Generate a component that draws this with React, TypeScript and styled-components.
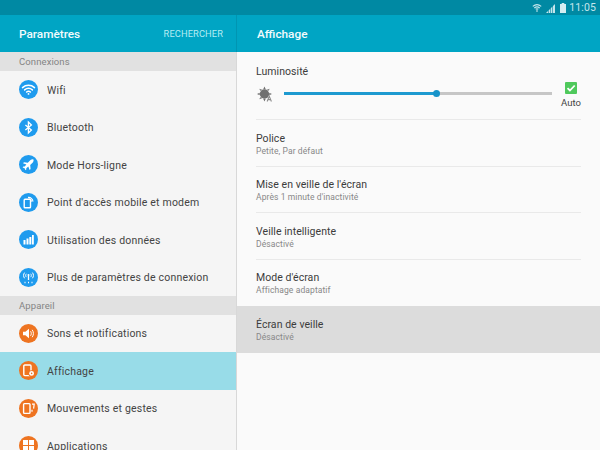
import React from 'react';
import styled, { createGlobalStyle } from 'styled-components';

const Global = createGlobalStyle`
  html, body { margin: 0; padding: 0; background: #fafafa; }
  body { font-family: Roboto, "Liberation Sans", sans-serif; }
`;

const Screen = styled.div`
  width: 600px; height: 450px; overflow: hidden; display: flex; flex-direction: column; background: #fafafa;
`;
const StatusBar = styled.div`
  height: 15px; flex: none; background: #0089a3; display: flex; align-items: center; justify-content: flex-end;
  padding-right: 4px; color: #c4e6ec; font-size: 10.5px; line-height: 15px;
`;
const Clock = styled.span`margin-left: 3px; letter-spacing: 0.1px;`;
const StatusIcon = styled.svg<{ $gap?: number }>`display: block; flex: none; margin-left: ${p => p.$gap ?? 0}px;`;
const Panes = styled.div`flex: 1; display: flex; min-height: 0;`;
const Left = styled.div`
  width: 237px; flex: none; display: flex; flex-direction: column; overflow: hidden;
`;
const LeftBody = styled.div`
  flex: 1; min-height: 0; background: #f5f5f5; border-right: 1px solid #d8d8d8; display: flex; flex-direction: column;
`;
const Right = styled.div`flex: 1; display: flex; flex-direction: column; min-width: 0;`;
const Header = styled.div`
  height: 37px; flex: none; box-sizing: border-box; background: #00a5c4; display: flex; align-items: center;
  justify-content: space-between; padding: 0 13px 0 19px; color: #fff; border-right: 1px solid #0095b2;
`;
const RightHeader = styled(Header)`padding-left: 20px; border-right: 0;`;
const Title = styled.div`font-size: 11.8px; font-weight: 500; color: #f2fbfd; padding-top: 1px;`;
const Search = styled.div`font-size: 9.3px; font-weight: 400; color: #b5ecf3; letter-spacing: 0.1px;`;
const Section = styled.div`
  height: 18.75px; flex: none; box-sizing: border-box; background: #e1e1e1; color: #848484; font-size: 9.5px; font-weight: 400;
  display: flex; align-items: center; padding: 1px 0 0 19px; letter-spacing: 0.1px;
`;
const Row = styled.div<{ $active?: boolean }>`
  height: 37.5px; flex: none; display: flex; align-items: center; padding-left: 19px; gap: 9px;
  background: ${p => (p.$active ? '#98dce8' : 'transparent')};
`;
const Badge = styled.div<{ $color: string }>`
  width: 19px; height: 19px; border-radius: 50%; flex: none; background: ${p => p.$color};
  display: flex; align-items: center; justify-content: center;
`;
const RowLabel = styled.div`font-size: 10.5px; color: #444; letter-spacing: 0.2px; white-space: nowrap; padding-top: 1px;`;
const Brightness = styled.div`
  height: 68px; flex: none; padding: 0 19px; display: flex; flex-direction: column;
`;
const BrightInner = styled.div`
  border-bottom: 1px solid #e9e9e9; height: 68px; display: flex; flex-direction: column;
`;
const ItemLabel = styled.div`font-size: 10.5px; color: #3c3c3c; letter-spacing: 0.05px; line-height: 13px;`;
const BrightLabel = styled(ItemLabel)`margin-top: 13px;`;
const SliderRow = styled.div`display: flex; align-items: flex-start; margin-top: 4px;`;
const SliderIcon = styled.svg`flex: none; display: block; margin: 4px 0 0 1px;`;
const Track = styled.div`
  margin: 10px 0 0 11px; width: 268px; height: 3px; background: #c6c6c6; position: relative; flex: none;
`;
const Fill = styled.div`height: 100%; background: #1e9ad0;`;
const Thumb = styled.div`
  position: absolute; top: -2px; width: 7px; height: 7px; border-radius: 50%; background: #1793c9; margin-left: -3.5px;
`;
const Auto = styled.div`
  flex: none; margin-left: 9px; width: 20px; display: flex; flex-direction: column; align-items: center;
`;
const AutoText = styled.div`font-size: 9.5px; color: #444; line-height: 12px; margin-top: 3px;`;
const Check = styled.div`
  width: 12px; height: 12px; background: #4fc95c; border-radius: 1px; display: flex; align-items: center; justify-content: center;
`;
const Item = styled.div<{ $hl?: boolean }>`
  height: 46.5px; flex: none; padding: 0 19px; background: ${p => (p.$hl ? '#dcdcdc' : 'transparent')};
`;
const ItemInner = styled.div<{ $noLine?: boolean }>`
  height: 100%; box-sizing: border-box; display: flex; flex-direction: column; justify-content: center;
  border-bottom: 1px solid ${p => (p.$noLine ? 'transparent' : '#e9e9e9')};
  padding-top: 3px;
`;
const Sub = styled.div`font-size: 8.5px; color: #888; letter-spacing: 0.1px; line-height: 11px; margin-top: 1px;`;

const Ico = styled.svg`display: block;`;
const W = '#fff';

const icons: Record<string, React.ReactNode> = {
  wifi: (
    <Ico width="15" height="15" viewBox="0 0 15 15" fill="none" stroke={W} strokeWidth="1.5" strokeLinecap="round">
      <path d="M1.5 5.6C5 2.6 10 2.6 13.5 5.6" />
      <path d="M3.6 7.9C6 5.9 9 5.9 11.4 7.9" />
      <path d="M5.6 10C6.8 9 8.2 9 9.4 10" />
      <circle cx="7.5" cy="11.9" r="0.9" fill={W} stroke="none" />
    </Ico>
  ),
  bt: (
    <Ico width="15" height="15" viewBox="0 0 15 15" fill="none" stroke={W} strokeWidth="1.3">
      <path d="M4.4 5l6 5-3 3V2l3 3-6 5" />
    </Ico>
  ),
  plane: (
    <Ico width="15" height="15" viewBox="0 0 15 15" fill={W}>
      <path d="M1.5 6.3l1-1 3.8.4L9 3.1c.8-.7 2.4-1.1 2.9-.6.5.5.1 2.1-.6 2.9L8.7 8.1l.4 3.8-1 1-1.3-3.4-2 1.7v1.3l-.8.8-.9-2-2-.9.8-.8h1.3l1.7-2z" transform="translate(0.5 0)" />
    </Ico>
  ),
  hotspot: (
    <Ico width="15" height="15" viewBox="0 0 15 15" fill="none" stroke={W}>
      <rect x="3.2" y="4.2" width="6.3" height="8.6" rx="0.8" strokeWidth="1.4" />
      <path d="M7 2.4c2.5-.4 4.8 1.5 5 4.2M7.6 4c1.3 0 2.7 1 2.9 2.6" strokeWidth="1.1" />
    </Ico>
  ),
  data: (
    <Ico width="15" height="15" viewBox="0 0 15 15" fill={W}>
      <rect x="2.5" y="8" width="2" height="4.5" />
      <rect x="5.5" y="6.5" width="2" height="6" />
      <rect x="8.3" y="5" width="2" height="7.5" />
      <rect x="11" y="3" width="1.8" height="9.5" />
    </Ico>
  ),
  more: (
    <Ico width="15" height="15" viewBox="0 0 15 15" fill="none" stroke={W} strokeWidth="1">
      <path d="M3.6 2.6c-1.4 1.7-1.4 4 0 5.7M11.4 2.6c1.4 1.7 1.4 4 0 5.7M5.3 3.8c-.8 1-.8 2.3 0 3.3M9.7 3.8c.8 1 .8 2.3 0 3.3" />
      <path d="M7.5 5.5V10" strokeWidth="1.3" />
      <circle cx="7.5" cy="5" r="1" fill={W} stroke="none" />
      <path d="M3.5 12.5h1M7 12.5h1M10.5 12.5h1" strokeWidth="1.5" />
    </Ico>
  ),
  sound: (
    <Ico width="15" height="15" viewBox="0 0 15 15" fill="none" stroke={W}>
      <path d="M2 5.7h2.4L8 2.7v9.6L4.4 9.3H2z" fill={W} stroke="none" />
      <path d="M9.6 5.2c.9 1.4.9 3.2 0 4.6M11.2 3.8c1.6 2.2 1.6 5.2 0 7.4" strokeWidth="1" />
    </Ico>
  ),
  display: (
    <Ico width="15" height="15" viewBox="0 0 15 15" fill="none" stroke={W}>
      <rect x="2.8" y="2" width="7.2" height="10.6" rx="1" strokeWidth="1.4" />
      <circle cx="10.6" cy="10.4" r="3.2" fill="#ee7421" stroke="none" />
      <circle cx="10.6" cy="10.4" r="2.4" fill={W} stroke="none" />
      <circle cx="10.6" cy="10.4" r="0.8" fill="#ee7421" stroke="none" />
    </Ico>
  ),
  motion: (
    <Ico width="15" height="15" viewBox="0 0 15 15" fill="none" stroke={W}>
      <rect x="2.6" y="2.6" width="6.4" height="9.8" rx="0.8" strokeWidth="1.4" />
      <path d="M11 3.2h2.2l-.6 4.4M11 8.8v2" strokeWidth="1.2" />
    </Ico>
  ),
  apps: (
    <Ico width="15" height="15" viewBox="0 0 15 15" fill={W}>
      <rect x="2" y="2" width="5" height="5" />
      <rect x="8" y="2" width="5" height="5" />
      <rect x="2" y="8" width="5" height="5" />
      <rect x="8" y="8" width="5" height="5" />
    </Ico>
  ),
};

const BLUE = '#1f9bee';
const ORANGE = '#ee7421';

const group1 = [
  ['wifi', 'Wifi'],
  ['bt', 'Bluetooth'],
  ['plane', 'Mode Hors-ligne'],
  ['hotspot', "Point d'accès mobile et modem"],
  ['data', 'Utilisation des données'],
  ['more', 'Plus de paramètres de connexion'],
];
const group2 = [
  ['sound', 'Sons et notifications'],
  ['display', 'Affichage'],
  ['motion', 'Mouvements et gestes'],
  ['apps', 'Applications'],
];
const items = [
  ['Police', 'Petite, Par défaut'],
  ["Mise en veille de l'écran", "Après 1 minute d'inactivité"],
  ['Veille intelligente', 'Désactivé'],
  ["Mode d'écran", 'Affichage adaptatif'],
  ['Écran de veille', 'Désactivé'],
];

export default function App() {
  return (
    <Screen>
      <Global />
      <StatusBar>
        <StatusIcon width="10" height="10" viewBox="0 0 13 11" fill="none" stroke="#c4e6ec" strokeWidth="1.5">
          <path d="M1 3.4C4.2.8 8.8.8 12 3.4M3 5.4c2-1.5 5-1.5 7 0M4.8 7.2c1-.7 2.4-.7 3.4 0" />
          <path d="M6.5 8.4v2" strokeWidth="1.8" />
        </StatusIcon>
        <StatusIcon $gap={4} width="10" height="10" viewBox="0 0 10 10">
          <path d="M0 10l2-2v2zM2.6 10V7.4l1.6-1.6V10zM4.8 10V5.2l1.6-1.6V10zM7 10V3l2-2v9z" fill="#c4e6ec" />
        </StatusIcon>
        <StatusIcon $gap={4} width="6" height="10" viewBox="0 0 6 10">
          <path d="M1.7 0h2.6v1H6v9H0V1h1.7z" fill="#d4eef2" />
        </StatusIcon>
        <Clock>11:05</Clock>
      </StatusBar>
      <Panes>
        <Left>
          <Header>
            <Title>Paramètres</Title>
            <Search>RECHERCHER</Search>
          </Header>
          <LeftBody>
            <Section>Connexions</Section>
            {group1.map(([ic, label]) => (
              <Row key={label}>
                <Badge $color={BLUE}>{icons[ic]}</Badge>
                <RowLabel>{label}</RowLabel>
              </Row>
            ))}
            <Section>Appareil</Section>
            {group2.map(([ic, label]) => (
              <Row key={label} $active={label === 'Affichage'}>
                <Badge $color={ORANGE}>{icons[ic]}</Badge>
                <RowLabel>{label}</RowLabel>
              </Row>
            ))}
          </LeftBody>
        </Left>
        <Right>
          <RightHeader>
            <Title>Affichage</Title>
          </RightHeader>
          <Brightness>
            <BrightInner>
              <BrightLabel>Luminosité</BrightLabel>
              <SliderRow>
                <SliderIcon width="16" height="16" viewBox="0 0 15 15">
                  <g fill="#707070">
                    <circle cx="7" cy="7.5" r="4.4" />
                    <path d="M7 .5l1.2 2.5H5.8zM7 14.5l1.2-2.5H5.8zM0 7.5L2.5 6.3v2.4zM14 7.5L11.5 6.3v2.4zM2 2.5l2.8 1-1.3 1.3zM12 2.5l-2.8 1 1.3 1.3zM2 12.5l2.8-1-1.3-1.3z" />
                  </g>
                  <path d="M9.5 14.5l2-5 2 5M10.3 12.8h2.4" fill="none" stroke="#8a8a8a" strokeWidth="1" />
                </SliderIcon>
                <Track>
                  <Fill style={{ width: `${(152 / 268) * 100}%` }} />
                  <Thumb style={{ left: `${(152 / 268) * 100}%` }} />
                </Track>
                <Auto>
                  <Check>
                    <Ico width="10" height="10" viewBox="0 0 10 10" fill="none" stroke="#fff" strokeWidth="1.8">
                      <path d="M1.5 5.2l2.4 2.3 4.8-5" />
                    </Ico>
                  </Check>
                  <AutoText>Auto</AutoText>
                </Auto>
              </SliderRow>
            </BrightInner>
          </Brightness>
          {items.map(([t, s], i) => (
            <Item key={t} $hl={i === 4}>
              <ItemInner $noLine={i >= 3}>
                <ItemLabel>{t}</ItemLabel>
                <Sub>{s}</Sub>
              </ItemInner>
            </Item>
          ))}
        </Right>
      </Panes>
    </Screen>
  );
}
